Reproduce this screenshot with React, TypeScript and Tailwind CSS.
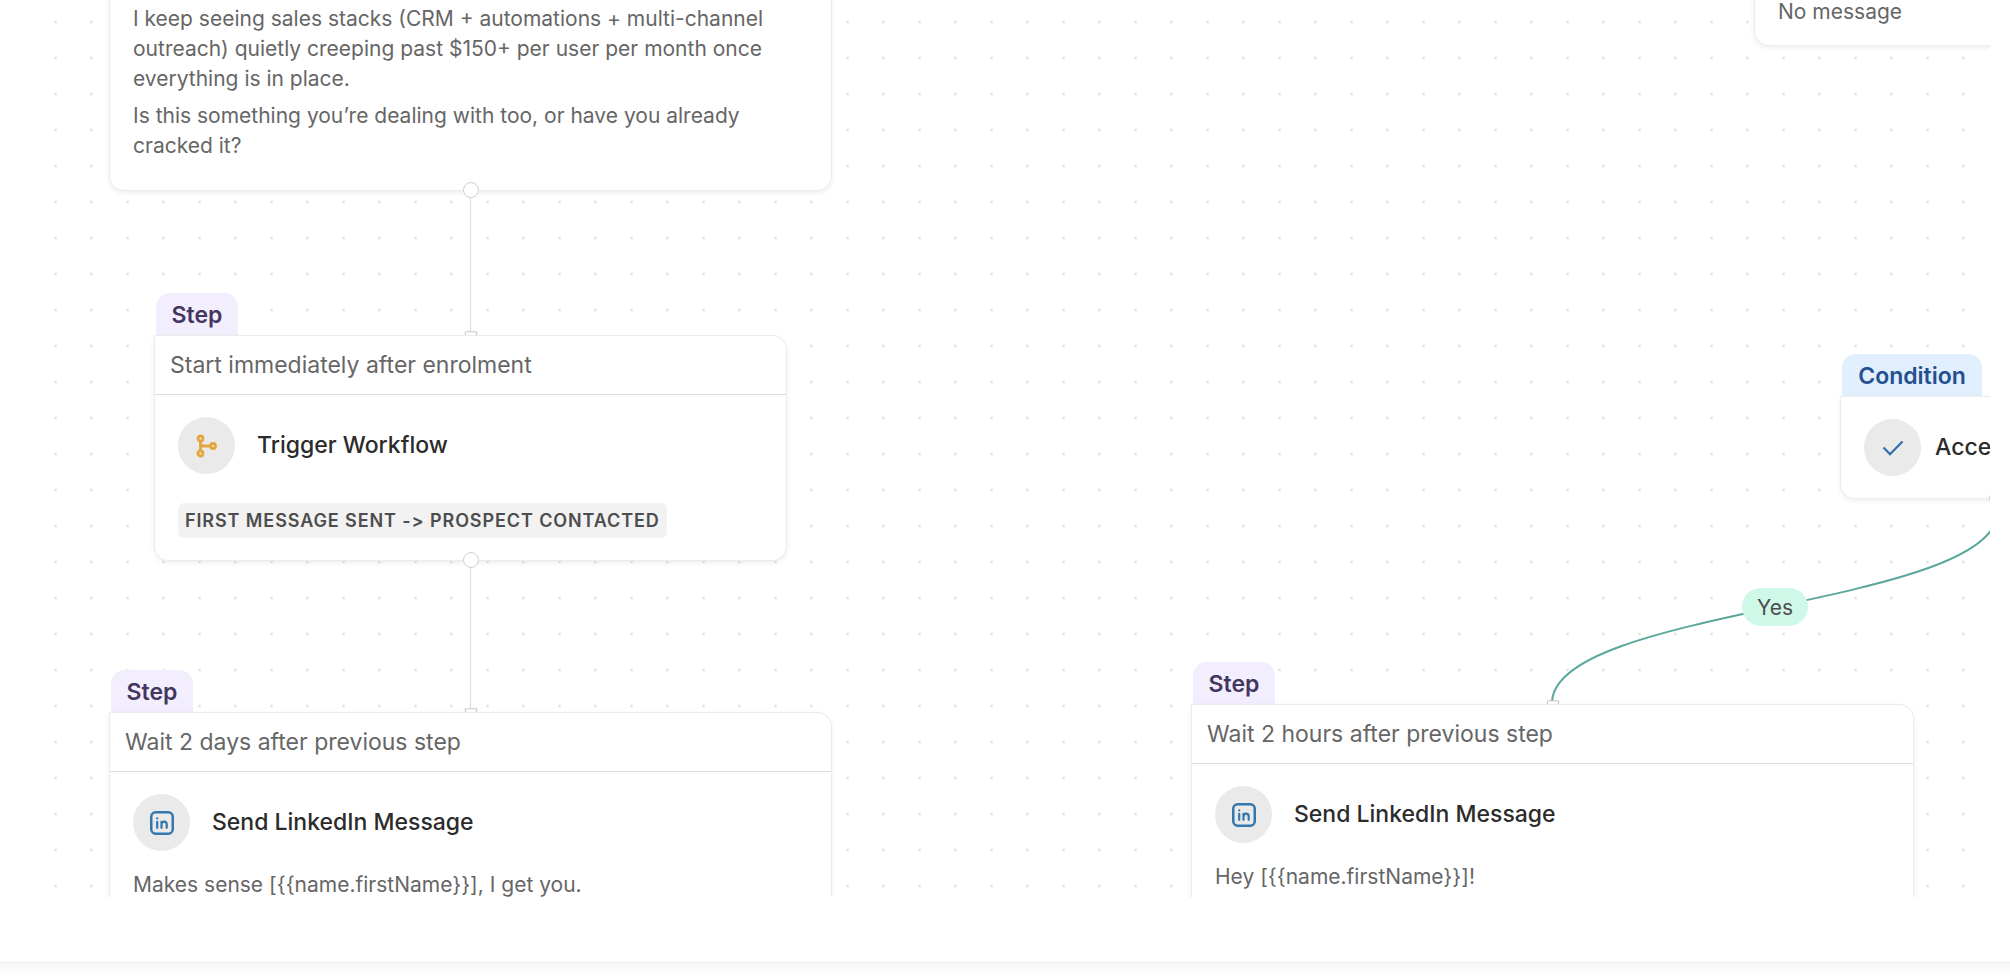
import React from "react";

type StepNodeProps = {
  className: string;
  timing: string;
  icon: React.ReactNode;
  title: string;
  children?: React.ReactNode;
};

const cardShadow = "shadow-[0_0_0_1px_#ececec,0_2px_6px_rgba(0,0,0,0.09)]";

function LinkedInIcon() {
  return (
    <svg viewBox="0 0 24 24" className="h-6 w-6" fill="none" stroke="#3377ad" strokeWidth="2.500" strokeLinecap="round" strokeLinejoin="round" aria-hidden="true">
      <rect x="1.250" y="1.250" width="21.500" height="21.500" rx="4.500" />
      <path strokeWidth="2.200" d="M7.200 10.800v6M7.200 7.300v.2M11.500 16.800v-6M11.500 13.500c0-1.800 1-2.800 2.600-2.800s2.600 1 2.600 2.800v3.300" />
    </svg>
  );
}

function WorkflowIcon() {
  return (
    <svg viewBox="0 0 24 24" className="h-6 w-6" fill="none" stroke="#e5a63f" strokeWidth="2.800" aria-hidden="true">
      <circle cx="5.500" cy="4.500" r="2.500" />
      <circle cx="5.500" cy="19.500" r="2.500" />
      <circle cx="18" cy="12" r="2.500" />
      <path d="M5.500 7v10M5.500 9.500q0 2.500 3 2.500h7" />
    </svg>
  );
}

function CheckIcon() {
  return (
    <svg viewBox="0 0 24 24" className="h-6 w-6" fill="none" stroke="#2f6fae" strokeWidth="2.200" aria-hidden="true">
      <path d="M2.500 11.500 9 18.200 21.500 5.500" />
    </svg>
  );
}

function IconBubble({ children }: { children: React.ReactNode }) {
  return (
    <span className="flex h-[57px] w-[57px] shrink-0 items-center justify-center rounded-full bg-[#eaeaea]">
      {children}
    </span>
  );
}

function SourceHandle() {
  return (
    <span className="absolute -bottom-2 left-1/2 h-4 w-4 -translate-x-1/2 rounded-full border border-[#cfcfcf] bg-white" />
  );
}

function TargetHandle() {
  return (
    <svg viewBox="0 0 14 6" className="absolute -top-[5px] left-1/2 h-[6px] w-[14px] -translate-x-1/2" fill="#ffffff" stroke="#c4c4c4" aria-hidden="true">
      <path d="M2.500 6 1 1.500Q.8 .8 1.500 .8h11q.7 0 .5.700L11.500 6" />
    </svg>
  );
}

function StepNode({ className, timing, icon, title, children }: StepNodeProps) {
  return (
    <section className={`absolute ${className}`}>
      <h2 className="ml-px flex h-[43px] w-[82px] items-center justify-center rounded-t-[14px] bg-[#f3eefe] pt-px text-[23px] font-semibold text-[#43365f]">
        Step
      </h2>
      <div className="relative">
        <TargetHandle />
        <div className={`relative rounded-[14px] rounded-tl-none bg-white ${cardShadow}`}>
          <p className="flex h-[59px] items-center border-b border-[#dcdcdc] px-[15px] text-[23px] text-[#666666]">
            {timing}
          </p>
          <div className="px-[23px] py-[22px]">
            <div className="flex items-center gap-[22px]">
              <IconBubble>{icon}</IconBubble>
              <h3 className="text-[23px] font-medium text-[#2b2b2b]">{title}</h3>
            </div>
            {children}
          </div>
        </div>
        <SourceHandle />
      </div>
    </section>
  );
}

function Connections() {
  return (
    <svg className="absolute inset-0 h-full w-full" aria-hidden="true">
      <defs>
        <pattern id="dots" x="13" y="4" width="36" height="36" patternUnits="userSpaceOnUse">
          <circle cx="18.500" cy="18" r="1.500" fill="#e6e6e6" />
        </pattern>
      </defs>
      <rect width="100%" height="100%" fill="url(#dots)" />
      <g fill="none">
        <path d="M446.500 191v140M446.500 561v148" stroke="#e2e2e2" strokeWidth="1.500" />
        <path d="M1974 511C1974 607 1528 607 1528 703" stroke="#5aa79c" strokeWidth="2" />
      </g>
    </svg>
  );
}

export default function App() {
  return (
    <div className="flex min-h-screen flex-col bg-white font-['Inter',sans-serif]">
      <main className="relative mr-5 ml-6 flex-1 overflow-hidden">
        <Connections />

        <section className={`absolute -top-5 left-[86px] w-[721px] rounded-[14px] bg-white px-[23px] pt-6 pb-[29px] text-[21px] leading-[30px] text-[#666666] ${cardShadow}`}>
          <p>
            I keep seeing sales stacks (CRM + automations + multi-channel outreach) quietly creeping
            past $150+ per user per month once everything is in place.
          </p>
          <p className="mt-[7px]">
            Is this something you’re dealing with too, or have you already cracked it?
          </p>
          <SourceHandle />
        </section>

        <section className={`absolute -top-5 left-[1731px] w-[721px] rounded-[14px] bg-white px-[23px] pt-[17px] pb-[18px] text-[21px] leading-[30px] text-[#666666] ${cardShadow}`}>
          <p>No message</p>
        </section>

        <StepNode
          className="top-[293px] left-[131px] w-[631px]"
          timing="Start immediately after enrolment"
          icon={<WorkflowIcon />}
          title="Trigger Workflow"
        >
          <p className="mt-[29px] flex h-[35px] w-fit items-center rounded-md bg-[#f2f2f2] px-[7px] text-[18px] font-semibold tracking-wider text-[#4d4d4d] uppercase">
            First message sent -&gt; Prospect contacted
          </p>
        </StepNode>

        <StepNode
          className="top-[670px] left-[86px] w-[721px]"
          timing="Wait 2 days after previous step"
          icon={<LinkedInIcon />}
          title="Send LinkedIn Message"
        >
          <p className="mt-[19px] text-[21px] leading-[30px] text-[#666666]">
            {"Makes sense [{{name.firstName}}], I get you."}
          </p>
        </StepNode>

        <StepNode
          className="top-[662px] left-[1168px] w-[721px]"
          timing="Wait 2 hours after previous step"
          icon={<LinkedInIcon />}
          title="Send LinkedIn Message"
        >
          <p className="mt-[19px] text-[21px] leading-[30px] text-[#666666]">
            {"Hey [{{name.firstName}}]!"}
          </p>
        </StepNode>

        <section className="absolute top-[354px] left-[1817px] w-[312px]">
          <h2 className="ml-px flex h-[43px] w-[140px] items-center justify-center rounded-t-[14px] bg-[#e1eefd] pt-px text-[23px] font-semibold text-[#24508f]">
            Condition
          </h2>
          <div className={`relative flex items-center gap-[14px] rounded-[14px] rounded-tl-none bg-white px-[23px] py-[22px] ${cardShadow}`}>
            <IconBubble>
              <CheckIcon />
            </IconBubble>
            <h3 className="text-[23px] font-medium text-[#2b2b2b]">Accepted</h3>
            <SourceHandle />
          </div>
        </section>

        <span className="absolute top-[588px] left-[1718px] flex h-[38px] w-[66px] items-center justify-center rounded-full bg-[#d0f8e8] pt-px text-[21px] text-[#4d4d4d]">
          Yes
        </span>
      </main>

      <footer className="pt-[65px]">
        <div className="h-[14px] border-t border-[#efefef] bg-linear-to-b from-[#f7f7f7] to-[#fdfdfd]" />
      </footer>
    </div>
  );
}
